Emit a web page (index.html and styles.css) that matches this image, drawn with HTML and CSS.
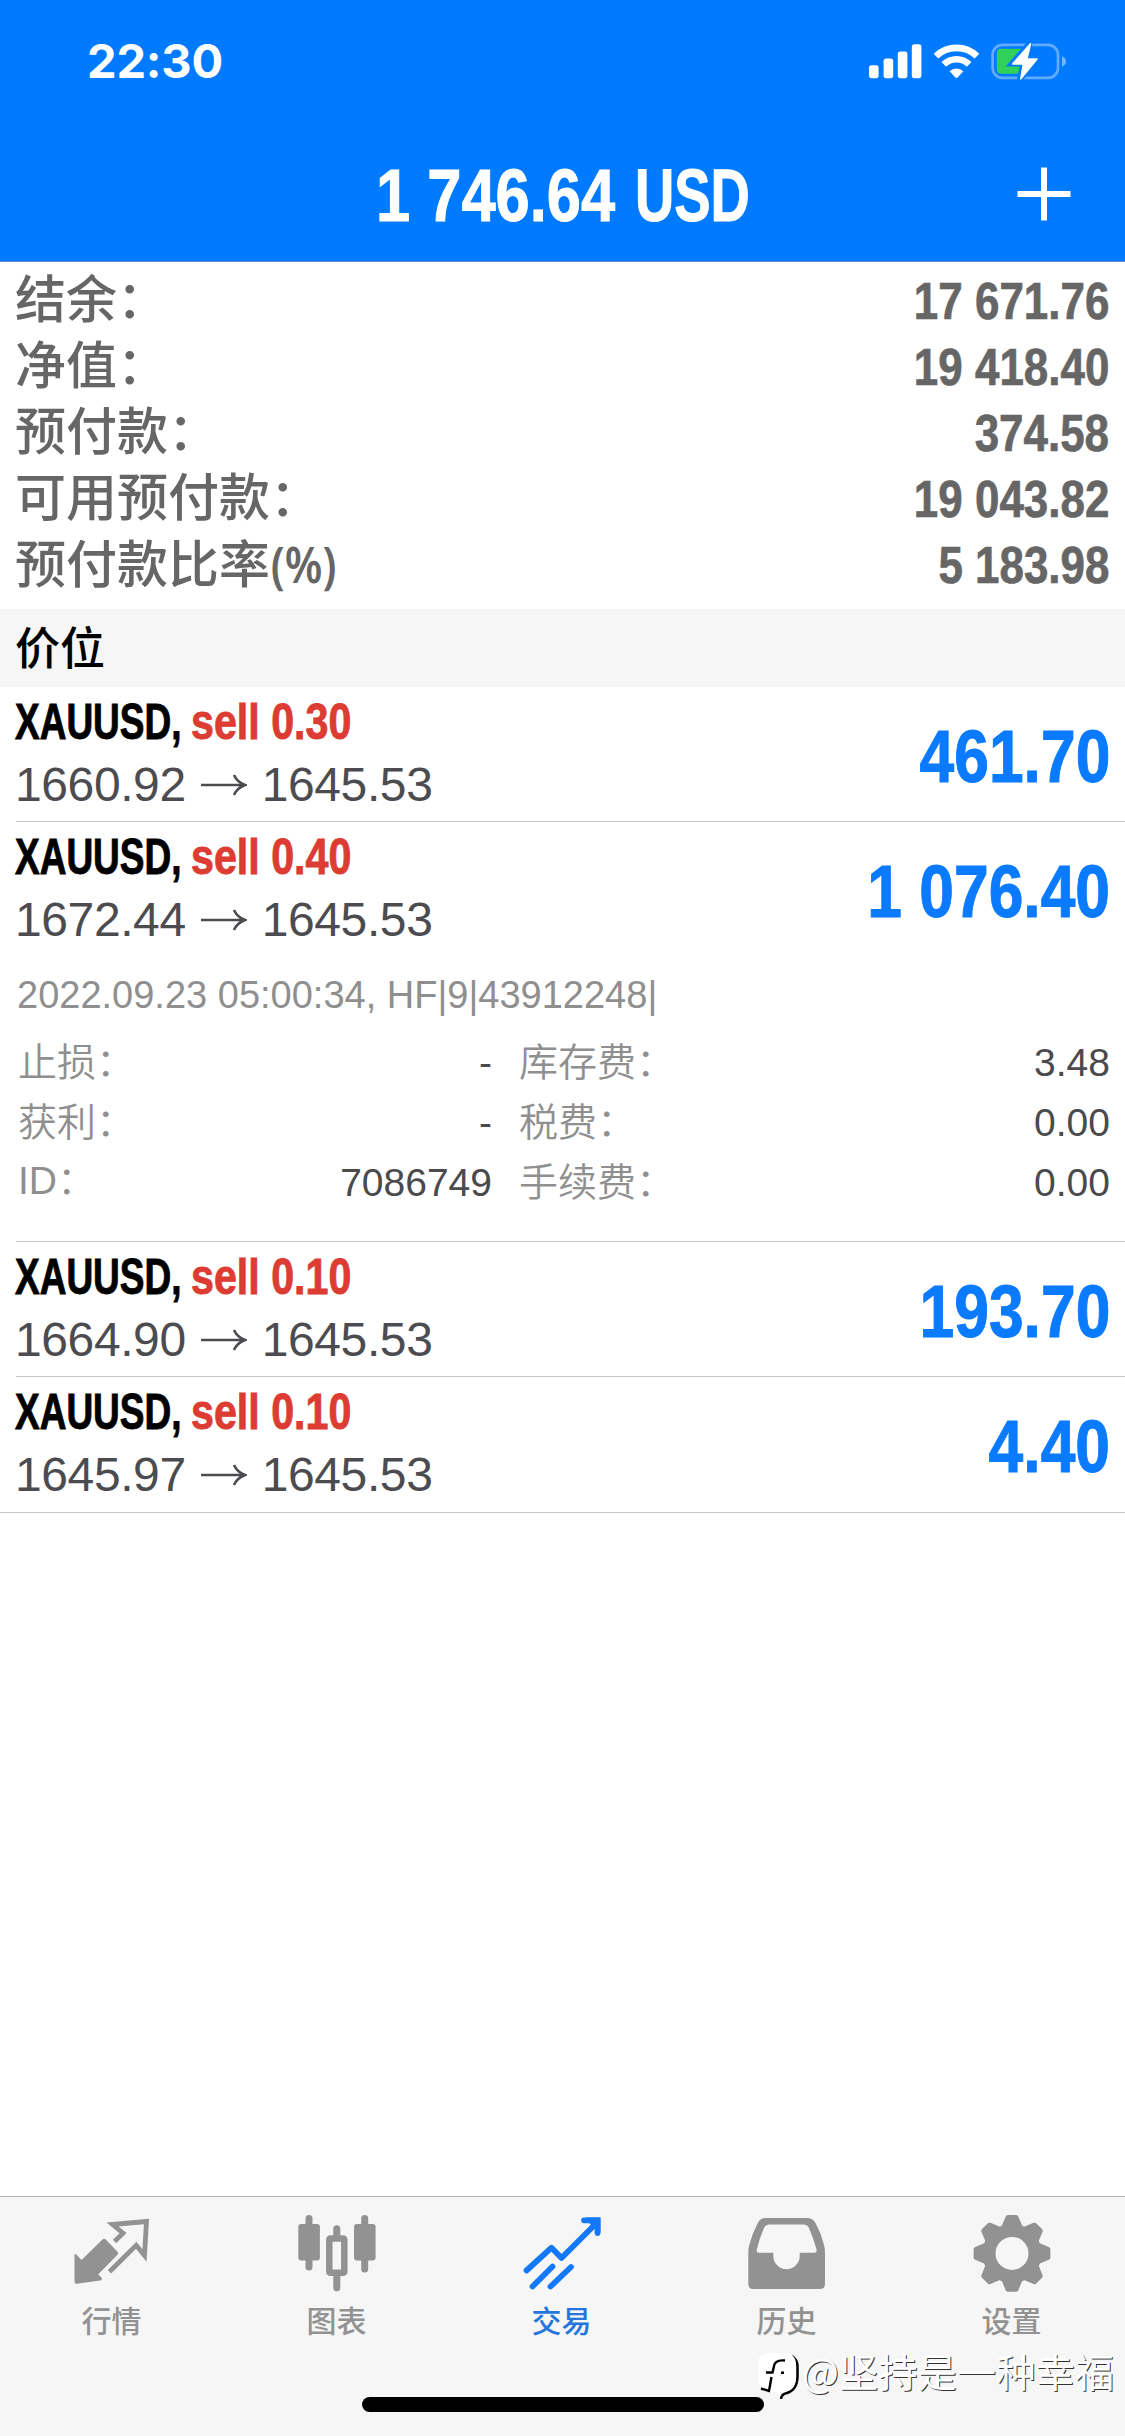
FILE: index.html
```html
<!DOCTYPE html>
<html lang="zh-CN">
<head>
<meta charset="utf-8">
<title>交易</title>
<link rel="stylesheet" href="styles.css">
</head>
<body>
<div class="app">
  <header class="header">
    <div class="status">
      <span class="clock">22:30</span>
      <svg class="status-icons" width="200" height="44" viewBox="868 38 200 44">
        <g fill="#fff">
          <rect x="869" y="64.3" width="9.6" height="12.9" rx="2.6"/>
          <rect x="883.6" y="57.6" width="9.6" height="19.6" rx="2.6"/>
          <rect x="897.8" y="50.4" width="9.6" height="26.8" rx="2.6"/>
          <rect x="911.8" y="43.3" width="9.6" height="33.9" rx="2.6"/>
        </g>
        <g fill="none" stroke="#fff" stroke-width="6.6">
          <path d="M936 55.200A29.500 29.500 0 0 1 977 55.200"/>
          <path d="M943.800 63.400A18.200 18.200 0 0 1 969.200 63.400"/>
        </g>
        <path d="M949.600 70.300A10 10 0 0 1 963.400 70.300L957.600 76.400Q956.500 77.500 955.400 76.400Z" fill="#fff"/>
        <rect x="992.600" y="43.900" width="65.400" height="33" rx="10" fill="none" stroke="#fff" stroke-opacity=".38" stroke-width="2.700"/>
        <path d="M1062 55.200Q1066 57 1066 60.500T1062 65.900Z" fill="#fff" fill-opacity=".45"/>
        <path d="M1001 47.700H1026V72.800H1001Q996.800 72.800 996.800 68.500V52Q996.800 47.700 1001 47.700Z" fill="#2fd158"/>
        <path d="M1031 39.500L1010 63.500H1022L1018.500 81L1040 57H1027.500Z" fill="#007aff" stroke="#007aff" stroke-width="4"/>
        <path d="M1030.500 42.800L1012.800 62.900H1023.400L1020.800 77.800L1037 58.100H1026.800Z" fill="#fff" stroke="#fff" stroke-width="1.600" stroke-linejoin="round"/>
      </svg>
    </div>
    <div class="nav">
      <h1 class="title"><span class="title-sum">1 746.64</span><span class="title-unit">USD</span></h1>
      <svg class="plus" width="54" height="54" viewBox="0 0 54 54"><path d="M27 .5V53.500M.5 27H53.500" stroke="#fff" stroke-width="6"/></svg>
    </div>
  </header>

  <section class="account">
    <div class="balance"><span class="balance-name">结余：</span><span class="balance-value">17 671.76</span></div>
    <div class="balance"><span class="balance-name">净值：</span><span class="balance-value">19 418.40</span></div>
    <div class="balance"><span class="balance-name">预付款：</span><span class="balance-value">374.58</span></div>
    <div class="balance"><span class="balance-name">可用预付款：</span><span class="balance-value">19 043.82</span></div>
    <div class="balance"><span class="balance-name">预付款比率<span class="percent">(%)</span></span><span class="balance-value">5 183.98</span></div>
  </section>

  <h2 class="section-title">价位</h2>

  <main class="positions">
    <article class="position">
      <div class="summary">
        <div>
          <div class="deal"><span class="symbol">XAUUSD,</span><span class="side">sell 0.30</span></div>
          <div class="prices"><span>1660.92</span><svg class="arrow" width="46" height="22" viewBox="0 0 46 22"><path d="M0 11H44M33 1Q36 8 44 11Q36 14 33 21"/></svg><span>1645.53</span></div>
        </div>
        <span class="profit">461.70</span>
      </div>
    </article>
    <article class="position">
      <div class="summary">
        <div>
          <div class="deal"><span class="symbol">XAUUSD,</span><span class="side">sell 0.40</span></div>
          <div class="prices"><span>1672.44</span><svg class="arrow" width="46" height="22" viewBox="0 0 46 22"><path d="M0 11H44M33 1Q36 8 44 11Q36 14 33 21"/></svg><span>1645.53</span></div>
        </div>
        <span class="profit">1 076.40</span>
      </div>
      <div class="details">
        <p class="opened">2022.09.23 05:00:34, HF|9|43912248|</p>
        <dl class="facts">
          <div class="fact"><dt>止损：</dt><dd>-</dd></div>
          <div class="fact"><dt>库存费：</dt><dd>3.48</dd></div>
          <div class="fact"><dt>获利：</dt><dd>-</dd></div>
          <div class="fact"><dt>税费：</dt><dd>0.00</dd></div>
          <div class="fact"><dt><span class="latin">ID</span>：</dt><dd>7086749</dd></div>
          <div class="fact"><dt>手续费：</dt><dd>0.00</dd></div>
        </dl>
      </div>
    </article>
    <article class="position">
      <div class="summary">
        <div>
          <div class="deal"><span class="symbol">XAUUSD,</span><span class="side">sell 0.10</span></div>
          <div class="prices"><span>1664.90</span><svg class="arrow" width="46" height="22" viewBox="0 0 46 22"><path d="M0 11H44M33 1Q36 8 44 11Q36 14 33 21"/></svg><span>1645.53</span></div>
        </div>
        <span class="profit">193.70</span>
      </div>
    </article>
    <article class="position">
      <div class="summary">
        <div>
          <div class="deal"><span class="symbol">XAUUSD,</span><span class="side">sell 0.10</span></div>
          <div class="prices"><span>1645.97</span><svg class="arrow" width="46" height="22" viewBox="0 0 46 22"><path d="M0 11H44M33 1Q36 8 44 11Q36 14 33 21"/></svg><span>1645.53</span></div>
        </div>
        <span class="profit">4.40</span>
      </div>
    </article>
  </main>

  <footer class="footer">
    <nav class="tabs">
      <a class="tab">
        <svg width="84" height="84" viewBox="0 0 84 84">
          <path d="M4.500 40.500Q4.500 38 6.500 39.800L11.500 45L32.500 24.500Q34.200 23 36 24.700L47.500 36.800Q48.800 38.300 47.500 39.700L28.300 59.200L31.800 63Q32.500 65.300 30 65.600L7 68.800Q4.500 69 4.500 66.500Z" fill="#929292"/>
          <path d="M44.500 26.500L53 18.200L42.500 9.500L76.500 6.500L74.500 40.500L66.200 30.300L39.500 56.800" fill="none" stroke="#929292" stroke-width="4.800"/>
        </svg>
        <span>行情</span>
      </a>
      <a class="tab">
        <svg width="84" height="84" viewBox="0 0 84 84">
          <g fill="#929292">
            <rect x="10.500" y="0" width="7" height="55.500" rx="3.500"/><rect x="3.300" y="9" width="21.600" height="36.500" rx="3"/>
            <rect x="66.200" y="0" width="7" height="57.500" rx="3.500"/><rect x="59" y="9" width="21.600" height="36.500" rx="3"/>
            <rect x="38.300" y="10.300" width="7" height="66" rx="3.500"/>
          </g>
          <rect x="34.300" y="23.500" width="15" height="34.300" rx="1" fill="#f6f6f6" stroke="#929292" stroke-width="6.500"/>
        </svg>
        <span>图表</span>
      </a>
      <a class="tab tab-active">
        <svg width="84" height="84" viewBox="0 0 84 84">
          <g fill="none" stroke="#1379f9" stroke-width="5.800" stroke-linecap="round">
            <path d="M6.500 55.500L31.500 32.700L41.500 43L77 7.500" stroke-linejoin="round"/>
            <path d="M12.500 71.500L32.500 51.500M30.500 71.500L51 52"/>
            <path d="M64 5.300H77.500V18"/>
          </g>
          <path d="M66 2.500H80.500V18L75 14L70 9Z" fill="#1379f9"/>
        </svg>
        <span>交易</span>
      </a>
      <a class="tab">
        <svg width="84" height="84" viewBox="0 0 84 84">
          <path fill="#929292" fill-rule="evenodd" d="M20.500 3H62.500Q67.500 3 70.500 8Q76.500 19 79 30Q80 33 80 38V69Q80 74 75 74H8.300Q3.300 74 3.300 69V38Q3.300 33 4.300 30Q7 19 12.800 8Q15.500 3 20.500 3ZM24 9.500Q21 9.500 19.500 12Q14.500 23 11.700 35Q11.500 37.800 14 37.800H28.300V41A13.200 13.200 0 0 0 54.700 41V37.800H69.500Q72 37.800 71.700 35Q68.500 23 63.500 12Q62 9.500 59 9.500Z"/>
        </svg>
        <span>历史</span>
      </a>
      <a class="tab">
        <svg width="84" height="84" viewBox="0 0 84 84">
          <g fill="#929292" stroke="#929292" stroke-width="5" stroke-linejoin="round">
            <circle cx="42" cy="38.400" r="23" stroke-width="13" fill="none"/>
            <path d="M38 2.500H46L50 12H34ZM38 74.300H46L50 64.800H34ZM6.100 34.400V42.400L15.600 46.400V30.400ZM77.900 34.400V42.400L68.400 46.400V30.400Z"/>
            <path transform="rotate(45 42 38.400)" d="M38 2.500H46L50 12H34ZM38 74.300H46L50 64.800H34ZM6.100 34.400V42.400L15.600 46.400V30.400ZM77.900 34.400V42.400L68.400 46.400V30.400Z"/>
          </g>
        </svg>
        <span>设置</span>
      </a>
    </nav>
    <div class="home-indicator"></div>
    <div class="watermark">
      <svg width="42" height="48" viewBox="0 0 42 48">
        <path d="M24 47Q24.500 42 30 41Q40 38 40.500 25V14Q40.500 8 35 4" fill="none" stroke="#000" stroke-width="2.500"/>
        <path d="M12 1H27Q39 1 39 13V25Q39 38 28 39.500Q23 41 22 45L20 40H12Q1 39 1 27V13Q1 1 12 1Z" fill="#fff"/>
        <path d="M28 8.500Q18 7.500 17 14L15.500 20.500H9M14.500 25L12 39L4 36.500M24 20.700H27" fill="none" stroke="#000" stroke-width="2.400"/>
      </svg>
      <span>@坚持是一种幸福</span>
    </div>
  </footer>
</div>
</body>
</html>
```
FILE: styles.css
```css
* { box-sizing: border-box; }

body {
  margin: 0;
  background: #fff;
  font-family: "Liberation Sans", "Noto Sans CJK SC", sans-serif;
}

h1, h2, p, dl, dd { margin: 0; }
svg { display: block; flex: none; }

.app {
  display: flex;
  flex-direction: column;
  width: 1125px;
  height: 2436px;
  overflow: hidden;
}

/* header */
.header {
  height: 262px;
  background: #007aff;
  color: #fff;
  border-bottom: 1px solid #5b92dd;
}
.status {
  display: flex;
  justify-content: space-between;
  align-items: center;
  height: 121px;
  padding: 0 57px 0 87px;
}
.clock {
  font: 700 47px/60px Inter, sans-serif;
  letter-spacing: -.2px;
}
.nav {
  display: flex;
  justify-content: flex-end;
  align-items: center;
  height: 146px;
  padding: 0 54px 0 0;
}
.title {
  display: flex;
  flex: 1;
  justify-content: center;
  gap: 14px;
  padding: 3px 0 0 112px;
  font-size: 74px;
  line-height: 80px;
  white-space: nowrap;
  -webkit-text-stroke: 1px currentColor;
}
.title-sum {
  width: 245px;
  transform: scaleX(.83);
  transform-origin: left;
}
.title-unit {
  width: 118px;
  transform: scaleX(.735);
  transform-origin: left;
}

/* account figures */
.account {
  height: 347px;
  padding: 3px 16px 0 15px;
  color: #666;
}
.balance {
  display: flex;
  justify-content: space-between;
  align-items: center;
  height: 66px;
}
.balance-name {
  padding-top: 6px;
  font-size: 51px;
  font-weight: 500;
  line-height: 58px;
  white-space: nowrap;
}
.percent {
  display: inline-block;
  width: 66px;
  padding-left: 1px;
  font: 600 50px/58px "Noto Sans", sans-serif;
  transform: scaleX(.86);
  transform-origin: left;
}
.balance-value {
  padding-top: 5px;
  font-size: 52px;
  font-weight: 700;
  line-height: 60px;
  transform: scaleX(.845);
  transform-origin: right;
  -webkit-text-stroke: .7px currentColor;
}

.section-title {
  height: 78px;
  padding-left: 15px;
  background: #f6f6f6;
  color: #000;
  font: 500 45px/73px "Noto Sans CJK SC", sans-serif;
}

/* positions */
.position {
  margin-left: 16px;
  border-bottom: 1px solid #c6c6c8;
}
.position:last-child {
  margin-left: 0;
  padding-left: 16px;
  height: 136px;
}
.summary {
  display: flex;
  justify-content: space-between;
  height: 134px;
  padding-right: 15px;
}
.deal {
  display: flex;
  margin-left: -1px;
  padding-top: 5px;
  font-size: 50px;
  font-weight: 700;
  line-height: 60px;
  white-space: nowrap;
  -webkit-text-stroke: .9px currentColor;
}
.symbol {
  width: 176px;
  color: #000;
  transform: scaleX(.74);
  transform-origin: left;
}
.side {
  color: #dc3c31;
  transform: scaleX(.824);
  transform-origin: left;
}
.prices {
  display: flex;
  align-items: center;
  gap: 15px;
  margin-left: -1px;
  padding-top: 3px;
  color: #4c4c50;
  font-size: 48px;
  line-height: 60px;
  letter-spacing: -.4px;
}
.arrow path {
  fill: none;
  stroke: #4c4c50;
  stroke-width: 2.6;
}
.profit {
  padding-top: 30px;
  color: #0a7aff;
  font-size: 74px;
  font-weight: 700;
  line-height: 80px;
  transform: scaleX(.843);
  transform-origin: right;
  -webkit-text-stroke: 1px currentColor;
}

.details {
  height: 285px;
  padding: 16px 15px 0 2px;
  color: #8f8f8f;
}
.opened {
  margin-left: -1px;
  padding-top: 1px;
  font-size: 38px;
  line-height: 44px;
  white-space: nowrap;
}
.facts {
  display: grid;
  grid-template-columns: 474px 591px;
  column-gap: 27px;
  padding-top: 12px;
}
.fact {
  display: flex;
  justify-content: space-between;
  align-items: center;
  height: 60px;
  font-size: 39px;
}
.fact dt {
  font: 350 39px/56px "Noto Sans CJK SC", sans-serif;
}
.latin { font-family: "Liberation Sans", sans-serif; }
.fact dd {
  padding-top: 7px;
  color: #4a4a4c;
  line-height: 53px;
}

/* bottom bar */
.footer {
  position: relative;
  height: 240px;
  margin-top: auto;
  background: #f6f6f6;
  border-top: 1px solid #b2b2b2;
}
.tabs {
  display: grid;
  grid-template-columns: repeat(5, 225px);
}
.tab {
  display: flex;
  flex-direction: column;
  align-items: center;
  padding: 18px 2px 0 0;
  color: #929292;
  font: 500 30px/40px "Noto Sans CJK SC", sans-serif;
}
.tab-active { color: #2476dc; }
.home-indicator {
  position: absolute;
  left: 362px;
  top: 200px;
  width: 402px;
  height: 15px;
  border-radius: 8px;
  background: #000;
}
.watermark {
  position: absolute;
  left: 757px;
  top: 155px;
  display: flex;
  gap: 3px;
  color: #fff;
  font: 400 39px/36px "Noto Sans CJK SC", sans-serif;
  letter-spacing: .3px;
  white-space: nowrap;
  text-shadow: 1px 1px 0 #333;
}
```
